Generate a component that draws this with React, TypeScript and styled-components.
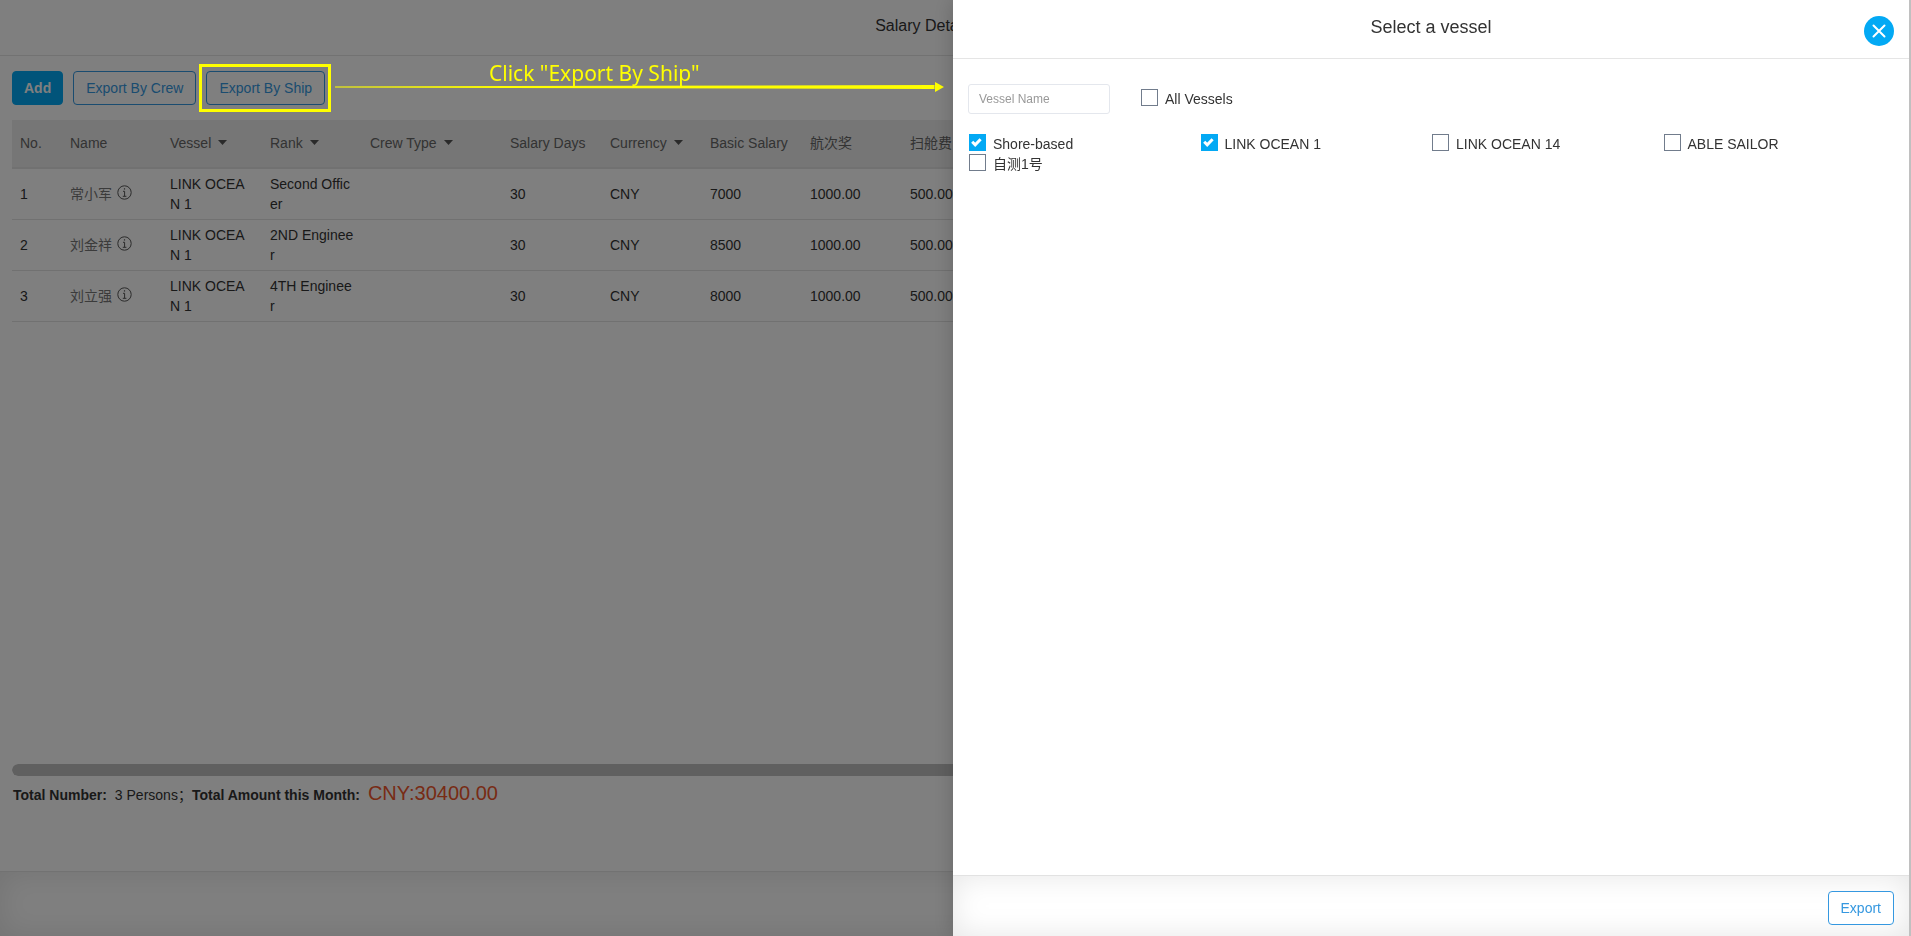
import React, { useState } from 'react';
import styled, { createGlobalStyle } from 'styled-components';

const GlobalStyle = createGlobalStyle`
  *, *::before, *::after { box-sizing: border-box; }
  body {
    margin: 0;
    background: #fff;
    color: #333;
    font-family: "Liberation Sans", "Noto Sans CJK SC", sans-serif;
    font-size: 14px;
    line-height: 20px;
    overflow: hidden;
  }
  button, input { font-family: inherit; margin: 0; }
`;

/* ---------- page behind the drawer ---------- */

const Page = styled.div`
  display: flex;
  flex-direction: column;
  height: 100vh;
  overflow: hidden;
`;

const PageHeader = styled.header`
  height: 56px;
  padding: 16px 62px 0 0;
  border-bottom: 1px solid #e5e5e5;
  text-align: center;
`;

const PageTitle = styled.h1`
  margin: 0;
  font-size: 16px;
  font-weight: 400;
  line-height: 20px;
`;

const PageBody = styled.main`
  flex: 1;
  display: flex;
  flex-direction: column;
  padding: 15px 12px 0;
  min-width: 0;
`;

const PageFooter = styled.footer`
  height: 65px;
  border-top: 1px solid #e5e5e5;
  box-shadow: inset 0 0 30px rgba(0, 0, 0, 0.1);
`;

const Toolbar = styled.div`
  display: flex;
  gap: 10px;
  margin-bottom: 15px;
`;

const Button = styled.button<{ $primary?: boolean }>`
  height: 34px;
  padding: 0 ${p => (p.$primary ? 11 : 12)}px;
  border: 1px solid ${p => (p.$primary ? '#03a9f4' : '#3598e0')};
  border-radius: 4px;
  background: ${p => (p.$primary ? '#03a9f4' : '#fff')};
  color: ${p => (p.$primary ? '#fff' : '#3598e0')};
  font-size: 14px;
  font-weight: ${p => (p.$primary ? 700 : 400)};
  line-height: 20px;
  white-space: nowrap;
  cursor: pointer;
`;

const TableArea = styled.div`
  flex: 1;
  overflow: hidden;
`;

const Table = styled.table`
  table-layout: fixed;
  width: 2200px;
  border-collapse: separate;
  border-spacing: 0;
`;

const HeadCell = styled.th`
  height: 49px;
  padding: 0 8px 2px;
  border-bottom: 2px solid #e2e2e2;
  background: #ededed;
  color: #666;
  font-weight: 400;
  text-align: left;
  white-space: nowrap;
`;

const Cell = styled.td`
  height: 51px;
  padding: 5px 8px;
  border-bottom: 1px solid #e2e2e2;
  word-break: break-all;
`;

const NameText = styled.span`
  display: flex;
  align-items: flex-start;
  gap: 5px;
  color: #777;
  white-space: nowrap;
`;

const SortCaret = styled.svg`
  width: 9px;
  height: 5px;
  margin-left: 7px;
  vertical-align: 3px;
  fill: #555;
`;

const InfoSvg = styled.svg`
  width: 15px;
  height: 15px;
  margin-top: 1px;
  fill: none;
  stroke: #555;
`;

const ScrollTrack = styled.div`
  height: 12px;
  overflow: hidden;
  border-radius: 6px;
`;

const ScrollThumb = styled.div`
  width: 90%;
  height: 12px;
  border-radius: 6px;
  background: #c1c1c1;
`;

const Totals = styled.div`
  display: flex;
  align-items: baseline;
  height: 95px;
  padding: 4px 1px 0;
  line-height: 26px;
  white-space: pre;
`;

const TotalLabel = styled.strong`
  margin-right: 8px;
`;

const TotalValue = styled.span`
  font-family: "Liberation Sans", "Noto Sans CJK SC", sans-serif;
`;

const Amount = styled.span`
  color: #f0562b;
  font-size: 20px;
`;

/* ---------- guide marks over the mask ---------- */

const Mask = styled.div`
  position: fixed;
  inset: 0 2px 0 0;
  background: rgba(0, 0, 0, 0.5);
`;

const Highlight = styled.div`
  position: fixed;
  left: 199px;
  top: 64px;
  width: 132px;
  height: 48px;
  border: 3px solid #ff0;
`;

const Guide = styled.div`
  position: fixed;
  left: 335px;
  top: 60px;
  width: calc(50vw - 347px);
  color: #ff0;
`;

const GuideText = styled.p`
  margin: 0 0 0 154px;
  height: 22px;
  font-family: "Noto Sans", sans-serif;
  font-size: 21px;
  line-height: 26px;
  white-space: nowrap;
`;

const GuideArrow = styled.div`
  display: flex;
  height: 10px;
`;

const ArrowShaft = styled.svg`
  flex: 1;
  min-width: 0;
  height: 10px;
  fill: #ff0;
`;

const ArrowHead = styled.svg`
  width: 9px;
  height: 10px;
  fill: #ff0;
`;

/* ---------- drawer ---------- */

const Drawer = styled.section`
  position: fixed;
  inset: 0 0 0 auto;
  display: flex;
  flex-direction: column;
  width: calc(round(50vw, 2px) + 2px);
  border-right: 2px solid #c0c0c0;
  background: #fff;
  box-shadow: 0 0 20px rgba(0, 0, 0, 0.2);
`;

const DrawerHeader = styled.header`
  display: grid;
  grid-template-columns: 30px 1fr 30px;
  height: 59px;
  padding: 16px 15px 0;
  border-bottom: 1px solid #e5e5e5;
`;

const DrawerTitle = styled.h2`
  grid-column: 2;
  margin: 0;
  font-size: 18px;
  font-weight: 400;
  line-height: 22px;
  text-align: center;
`;

const CloseButton = styled.button`
  display: grid;
  place-items: center;
  width: 30px;
  height: 30px;
  padding: 0;
  border: 0;
  border-radius: 50%;
  background: #03a9f4;
  cursor: pointer;
`;

const DrawerBody = styled.div`
  flex: 1;
  padding: 25px 15px 0;
`;

const FilterRow = styled.div`
  display: flex;
  align-items: center;
  gap: 30px;
  height: 30px;
  margin-bottom: 20px;
`;

const SearchInput = styled.input`
  width: 142px;
  height: 30px;
  padding: 0 10px;
  border: 1px solid #e4e7ed;
  border-radius: 3px;
  color: #333;
  font-size: 12px;
  outline: none;
  &::placeholder { color: #999; opacity: 1; }
`;

const VesselGrid = styled.div`
  display: grid;
  grid-template-columns: repeat(4, 1fr);
`;

const CheckLabel = styled.label`
  display: flex;
  gap: 7px;
  height: 20px;
  padding-left: 1px;
  white-space: nowrap;
  cursor: pointer;
`;

const CheckBoxWrap = styled.span`
  display: grid;
  width: 17px;
  height: 17px;
`;

const CheckInput = styled.input`
  grid-area: 1 / 1;
  appearance: none;
  width: 17px;
  height: 17px;
  border: 1px solid #717c8c;
  border-radius: 0;
  background: #fff;
  &:checked { border-color: #03a9f4; background: #03a9f4; }
`;

const CheckMark = styled.svg`
  grid-area: 1 / 1;
  width: 17px;
  height: 17px;
  fill: none;
  stroke: #fff;
  stroke-width: 3;
  pointer-events: none;
`;

const DrawerFooter = styled.footer`
  display: flex;
  justify-content: flex-end;
  height: 61px;
  padding: 15px 15px 0;
  border-top: 1px solid #e2e2e2;
  box-shadow: inset 0 0 30px rgba(0, 0, 0, 0.1);
`;

const columns = [
  { label: 'No.', width: 50 },
  { label: 'Name', width: 100 },
  { label: 'Vessel', width: 100, sort: true },
  { label: 'Rank', width: 100, sort: true },
  { label: 'Crew Type', width: 140, sort: true },
  { label: 'Salary Days', width: 100 },
  { label: 'Currency', width: 100, sort: true },
  { label: 'Basic Salary', width: 100 },
  { label: '航次奖', width: 100 },
  { label: '扫舱费', width: 100 },
  { label: '' },
];

const rows = [
  { name: '常小军', rank: 'Second Officer', basic: 7000 },
  { name: '刘金祥', rank: '2ND Engineer', basic: 8500 },
  { name: '刘立强', rank: '4TH Engineer', basic: 8000 },
];

const vessels = ['Shore-based', 'LINK OCEAN 1', 'LINK OCEAN 14', 'ABLE SAILOR', '自测1号'];

function InfoIcon() {
  return (
    <InfoSvg viewBox="0 0 15 15" aria-hidden="true">
      <circle cx="7.5" cy="7.5" r="6.7" />
      <path d="M6 6.3h1.6v4.9M5.8 11.3h3.6" />
      <path d="M6.9 3.9h1.2" strokeWidth="1.3" />
    </InfoSvg>
  );
}

function CheckField({ label, checked, onChange }: { label: string; checked: boolean; onChange: () => void }) {
  return (
    <CheckLabel>
      <CheckBoxWrap>
        <CheckInput type="checkbox" checked={checked} onChange={onChange} />
        {checked && (
          <CheckMark viewBox="0 0 17 17" aria-hidden="true">
            <path d="M3.2 7.8l3 3 5.4-5.6" />
          </CheckMark>
        )}
      </CheckBoxWrap>
      <span>{label}</span>
    </CheckLabel>
  );
}

export default function App() {
  const [selected, setSelected] = useState<string[]>(['Shore-based', 'LINK OCEAN 1']);
  const [search, setSearch] = useState('');
  const all = selected.length === vessels.length;

  const toggle = (vessel: string) =>
    setSelected(list => (list.includes(vessel) ? list.filter(v => v !== vessel) : [...list, vessel]));

  return (
    <>
      <GlobalStyle />
      <Page>
        <PageHeader>
          <PageTitle>Salary Details</PageTitle>
        </PageHeader>
        <PageBody>
          <Toolbar>
            <Button $primary>Add</Button>
            <Button>Export By Crew</Button>
            <Button>Export By Ship</Button>
          </Toolbar>
          <TableArea>
            <Table>
              <colgroup>
                {columns.map((c, i) => <col key={i} width={c.width} />)}
              </colgroup>
              <thead>
                <tr>
                  {columns.map((c, i) => (
                    <HeadCell key={i}>
                      {c.label}
                      {c.sort && <SortCaret viewBox="0 0 9 5" aria-hidden="true"><path d="M0 0h9L4.5 5z" /></SortCaret>}
                    </HeadCell>
                  ))}
                </tr>
              </thead>
              <tbody>
                {rows.map((r, i) => (
                  <tr key={r.name}>
                    <Cell>{i + 1}</Cell>
                    <Cell><NameText>{r.name}<InfoIcon /></NameText></Cell>
                    <Cell>LINK OCEAN 1</Cell>
                    <Cell>{r.rank}</Cell>
                    <Cell />
                    <Cell>30</Cell>
                    <Cell>CNY</Cell>
                    <Cell>{r.basic}</Cell>
                    <Cell>1000.00</Cell>
                    <Cell>500.00</Cell>
                    <Cell />
                  </tr>
                ))}
              </tbody>
            </Table>
          </TableArea>
          <ScrollTrack><ScrollThumb /></ScrollTrack>
          <Totals>
            <TotalLabel>Total Number:</TotalLabel>
            <TotalValue>3 Persons；</TotalValue>
            <TotalLabel>Total Amount this Month:</TotalLabel>
            <Amount>CNY:30400.00</Amount>
          </Totals>
        </PageBody>
        <PageFooter />
      </Page>

      <Mask />
      <Highlight />
      <Guide>
        <GuideText>Click "Export By Ship"</GuideText>
        <GuideArrow>
          <ArrowShaft viewBox="0 0 600 10" preserveAspectRatio="none" aria-hidden="true">
            <path d="M0 4.5L600 3v4L0 5.5z" />
          </ArrowShaft>
          <ArrowHead viewBox="0 0 9 10" aria-hidden="true"><path d="M0 0l9 5-9 5z" /></ArrowHead>
        </GuideArrow>
      </Guide>

      <Drawer role="dialog" aria-label="Select a vessel">
        <DrawerHeader>
          <DrawerTitle>Select a vessel</DrawerTitle>
          <CloseButton aria-label="Close">
            <svg width="14" height="14" viewBox="0 0 14 14" fill="none" stroke="#fff" strokeWidth="2" strokeLinecap="round">
              <path d="M1.5 1.5l11 11M12.5 1.5l-11 11" />
            </svg>
          </CloseButton>
        </DrawerHeader>
        <DrawerBody>
          <FilterRow>
            <SearchInput
              aria-label="Vessel Name"
              placeholder="Vessel Name"
              value={search}
              onChange={e => setSearch(e.target.value)}
            />
            <CheckField label="All Vessels" checked={all} onChange={() => setSelected(all ? [] : vessels)} />
          </FilterRow>
          <VesselGrid>
            {vessels
              .filter(v => v.toLowerCase().includes(search.toLowerCase()))
              .map(v => (
                <CheckField key={v} label={v} checked={selected.includes(v)} onChange={() => toggle(v)} />
              ))}
          </VesselGrid>
        </DrawerBody>
        <DrawerFooter>
          <Button>Export</Button>
        </DrawerFooter>
      </Drawer>
    </>
  );
}
